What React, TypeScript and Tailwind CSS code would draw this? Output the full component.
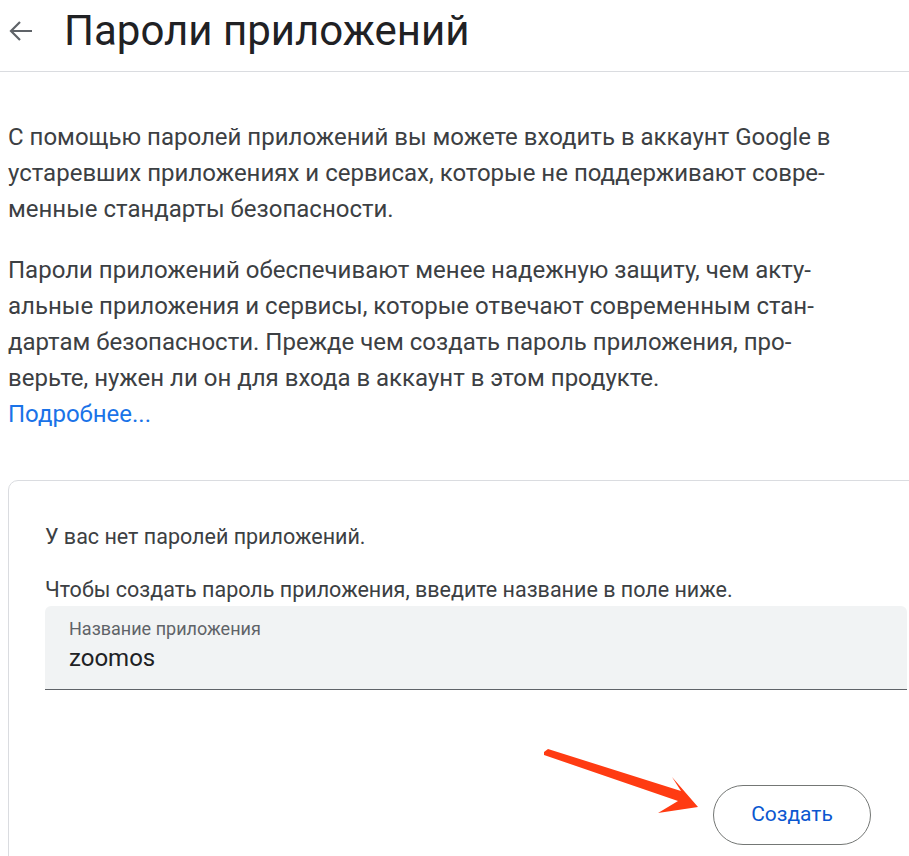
import React from 'react';

const App: React.FC = () => {
  return (
    <div className="w-[909px] h-[856px] overflow-hidden bg-white font-['Roboto',sans-serif] text-[#3c4043]">
      {/* Header */}
      <header className="h-[72px] border-b border-[#dadce0] flex items-center pb-[10px]">
        <button className="w-[42px] h-[42px] flex items-center justify-center text-[#5f6368]" aria-label="Назад">
          <svg width="26" height="26" viewBox="0 0 26 26" fill="none" stroke="currentColor" strokeWidth="2.2">
            <path d="M24 13H3M12 4l-9 9 9 9" />
          </svg>
        </button>
        <h1 className="ml-[22px] text-[42px] leading-none text-[#202124] whitespace-nowrap">Пароли приложений</h1>
      </header>

      <main className="pl-[8px]">
        <p className="mt-[47px] text-[24px] leading-[36px] whitespace-nowrap">
          С помощью паролей приложений вы можете входить в аккаунт Google в<br />
          устаревших приложениях и сервисах, которые не поддерживают совре-<br />
          менные стандарты безопасности.
        </p>
        <p className="mt-[25px] text-[24px] leading-[36px] whitespace-nowrap">
          Пароли приложений обеспечивают менее надежную защиту, чем акту-<br />
          альные приложения и сервисы, которые отвечают современным стан-<br />
          дартам безопасности. Прежде чем создать пароль приложения, про-<br />
          верьте, нужен ли он для входа в аккаунт в этом продукте.<br />
          <a href="#" className="text-[#1a73e8]">Подробнее...</a>
        </p>

        {/* Card */}
        <section className="mt-[48px] w-[960px] h-[400px] border border-[#dadce0] rounded-[10px] pl-[36px] pt-[42px]">
          <p className="text-[21.5px] leading-[28px] whitespace-nowrap">У вас нет паролей приложений.</p>
          <p className="mt-[25px] text-[21.5px] leading-[28px] whitespace-nowrap">Чтобы создать пароль приложения, введите название в поле ниже.</p>
          <div className="mt-[2px] w-[862px] h-[84px] bg-[#f1f3f4] rounded-t-[6px] border-b border-[#5f6368] pl-[24px] pt-[12px]">
            <div className="text-[18px] leading-[22px] text-[#5f6368]">Название приложения</div>
            <div className="mt-[3px] text-[24px] leading-[30px] text-[#202124]">zoomos</div>
          </div>
          <div className="w-[862px] flex justify-end pt-[95px] pr-[36px]">
            <button className="w-[158px] h-[60px] rounded-full border border-[#747775] text-[#0b57d0] text-[21px]">
              Создать
            </button>
          </div>
        </section>
      </main>

      {/* Annotation arrow */}
      <svg className="absolute left-[540px] top-[745px]" width="170" height="75" viewBox="0 0 170 75">
        <polygon points="4,7 8,4 141,46 132,32 158,62 118,68 138,56 4,10" fill="#ff3b12" />
      </svg>
    </div>
  );
};

export default App;
